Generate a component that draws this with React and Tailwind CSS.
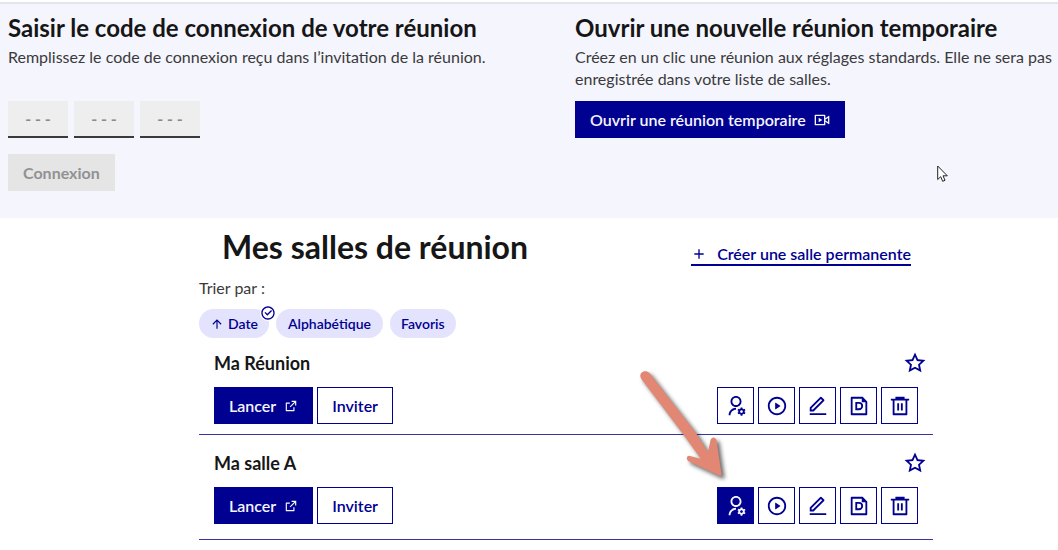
import {
  RiAddLine,
  RiArrowUpLine,
  RiCheckboxCircleLine,
  RiExternalLinkLine,
  RiPlayCircleLine,
  RiStarLine,
  RiUserSettingsLine,
} from 'react-icons/ri'

const rooms = [
  { id: 1, name: 'Ma Réunion', active: false },
  { id: 2, name: 'Ma salle A', active: true },
]

function EditIcon({ className }) {
  return (
    <svg viewBox="0 0 24 24" fill="currentColor" className={className} aria-hidden="true">
      <path d="M6.414 15.89 16.556 5.748l-1.414-1.414L5 14.476v1.414h1.414Zm.829 2H3v-4.243L14.435 2.212a1 1 0 0 1 1.414 0l2.829 2.829a1 1 0 0 1 0 1.414L7.243 17.89ZM3 19.89h18v2H3v-2Z" />
    </svg>
  )
}

function DocumentIcon({ className }) {
  return (
    <svg viewBox="0 0 24 24" fill="currentColor" className={className} aria-hidden="true">
      <path d="M16 2l5 5v14a1 1 0 0 1-1 1H4a1 1 0 0 1-1-1V3a1 1 0 0 1 1-1h12Zm-1 2H5v16h14V8h-4V4Z" />
      <path d="M8 7.500h4a4.500 4.500 0 0 1 0 9H8v-9Zm2 2v5h2a2.500 2.500 0 0 0 0-5h-2Z" />
    </svg>
  )
}

function TrashIcon({ className }) {
  return (
    <svg viewBox="0 0 24 24" fill="currentColor" className={className} aria-hidden="true">
      <path d="M7 4V2h10v2h5v2h-2v15a1 1 0 0 1-1 1H5a1 1 0 0 1-1-1V6H2V4h5Zm-1 2v14h12V6H6Zm3 3h2v8H9V9Zm4 0h2v8h-2V9Z" />
    </svg>
  )
}

function LiveIcon({ className }) {
  return (
    <svg viewBox="0 0 24 24" fill="currentColor" className={className} aria-hidden="true">
      <path d="M16 4a1 1 0 0 1 1 1v4.200l5.213-3.650a.5.5 0 0 1 .787.410v12.080a.5.5 0 0 1-.787.410L17 14.800V19a1 1 0 0 1-1 1H2a1 1 0 0 1-1-1V5a1 1 0 0 1 1-1h14Zm-1 2H3v12h12V6Zm6 2.841-4 2.800v.718l4 2.800V8.841Z" />
      <path d="M7.400 8.829a.4.4 0 0 1 .215.063l4.357 2.772a.4.4 0 0 1 0 .674l-4.357 2.773A.4.4 0 0 1 7 14.773V9.230a.4.4 0 0 1 .4-.401Z" />
    </svg>
  )
}

const actions = [
  { label: 'Gérer les modérateurs', Icon: RiUserSettingsLine },
  { label: 'Enregistrements', Icon: RiPlayCircleLine },
  { label: 'Modifier', Icon: EditIcon },
  { label: 'Documents', Icon: DocumentIcon },
  { label: 'Supprimer', Icon: TrashIcon },
]

function JoinForm() {
  return (
    <form onSubmit={(e) => e.preventDefault()}>
      <h2 className="text-2xl leading-8 font-bold text-[#161616]">Saisir le code de connexion de votre réunion</h2>
      <p className="mt-[2px] leading-[22px]">Remplissez le code de connexion reçu dans l’invitation de la réunion.</p>
      <div className="mt-[33px] flex gap-[6px]">
        {[1, 2, 3].map((n) => (
          <input
            key={n}
            aria-label={`Code, partie ${n}`}
            placeholder="- - -"
            maxLength={3}
            className="w-[60px] h-[37px] bg-[#eeeeee] border-b-2 border-[#3a3a3a] text-center font-bold placeholder:text-[#8a8a8a]"
          />
        ))}
      </div>
      <button type="submit" disabled className="mt-4 h-[37px] px-[15px] bg-[#e5e5e5] text-[#929292] font-bold">
        Connexion
      </button>
    </form>
  )
}

function QuickMeeting() {
  return (
    <div>
      <h2 className="text-2xl leading-8 font-bold text-[#161616]">Ouvrir une nouvelle réunion temporaire</h2>
      <p className="mt-[2px] leading-[22px] whitespace-nowrap">
        Créez en un clic une réunion aux réglages standards. Elle ne sera pas
        <br />
        enregistrée dans votre liste de salles.
      </p>
      <button type="button" className="mt-[11px] h-[37px] px-[15px] flex items-center gap-2 bg-[#000091] text-[#f5f5fe] font-semibold">
        Ouvrir une réunion temporaire
        <LiveIcon className="size-4" />
      </button>
    </div>
  )
}

function RoomRow({ room }) {
  return (
    <li className="border-b border-[#3a34a3] pt-[13px] pb-[10px] px-[15px] last:pt-4 last:pb-[15px]">
      <div className="flex items-center justify-between">
        <h3 className="text-lg leading-6 font-bold text-[#161616]">{room.name}</h3>
        <button type="button" aria-label="Ajouter aux favoris" className="-mr-2 text-[#000091]">
          <RiStarLine className="size-[22px]" />
        </button>
      </div>
      <div className="mt-3 flex items-center justify-between">
        <div className="flex gap-1">
          <button type="button" className="h-[37px] px-[15px] flex items-center gap-2 bg-[#000091] text-[#f5f5fe] font-semibold">
            Lancer
            <RiExternalLinkLine className="size-[14px]" />
          </button>
          <button type="button" className="h-[37px] px-[14px] border border-[#000091] text-[#000091] font-semibold">
            Inviter
          </button>
        </div>
        <div className="flex gap-1">
          {actions.map(({ label, Icon }, i) => (
            <button
              key={label}
              type="button"
              aria-label={label}
              className={`size-[37px] flex items-center justify-center border border-[#000091] ${
                room.active && i === 0 ? 'bg-[#000091] text-[#f5f5fe]' : 'text-[#000091]'
              }`}
            >
              <Icon className="size-[22px]" />
            </button>
          ))}
        </div>
      </div>
    </li>
  )
}

function PointerArrow() {
  return (
    <svg
      viewBox="0 0 100 130"
      className="absolute left-[630px] top-[360px] w-[100px] h-[130px] pointer-events-none drop-shadow-[3px_3px_2px_rgba(0,0,0,0.6)]"
      aria-hidden="true"
    >
      <path
        fill="#e18774"
        d="M19.500 13C15 8.500 8 13 11 18.500L53 74L71 99L60 96C56.500 95 55.500 99.500 59 101.500L90 116C91 116 92 115 91.500 114L86.500 80C85.500 76.500 81.500 76.500 80.500 80L78 92L66 73Z"
      />
    </svg>
  )
}

function Cursor() {
  return (
    <svg viewBox="0 0 12 18" className="absolute left-[937px] top-[165px] w-3 h-[18px] pointer-events-none" aria-hidden="true">
      <path fill="#fff" stroke="#222" strokeWidth="1" d="M.7 1v13.500l3-2.800 2 4.600 2.300-1-2-4.500h4.300Z" />
    </svg>
  )
}

export default function App() {
  return (
    <div className="relative overflow-hidden bg-white text-base text-[#3a3a3a] font-['Lato',sans-serif]">
      <section className="mt-[2px] border-t-2 border-[#e4e4ec] bg-[#f5f5fe] pt-2 pb-[27px] pl-2 grid grid-cols-[54fr_46fr]">
        <JoinForm />
        <QuickMeeting />
      </section>

      <main className="ml-[199px] mr-[125px] pt-[7px]">
        <div className="flex items-center justify-between pl-[23px] pr-[22px]">
          <h1 className="text-[32px] leading-[44px] font-bold text-[#161616]">Mes salles de réunion</h1>
          <a href="#creer" className="mt-4 flex items-center gap-[10px] border-b-2 border-[#000091] leading-5 font-semibold text-[#000091]">
            <RiAddLine className="size-4" />
            Créer une salle permanente
          </a>
        </div>

        <p className="mt-2 leading-[22px]">Trier par :</p>
        <div className="mt-[10px] flex gap-[7px] text-sm font-semibold text-[#000091]">
          <button type="button" aria-pressed="true" className="relative h-[29px] px-[11px] flex items-center gap-1 rounded-full bg-[#e3e3fd]">
            <RiArrowUpLine className="size-[14px]" />
            Date
            <span className="absolute -right-[7px] -top-1 rounded-full bg-white">
              <RiCheckboxCircleLine className="size-4" />
            </span>
          </button>
          <button type="button" className="h-[29px] px-3 rounded-full bg-[#e3e3fd]">Alphabétique</button>
          <button type="button" className="h-[29px] px-[11px] rounded-full bg-[#e3e3fd]">Favoris</button>
        </div>

        <ul>
          {rooms.map((room) => (
            <RoomRow key={room.id} room={room} />
          ))}
        </ul>
      </main>

      <Cursor />
      <PointerArrow />
    </div>
  )
}
